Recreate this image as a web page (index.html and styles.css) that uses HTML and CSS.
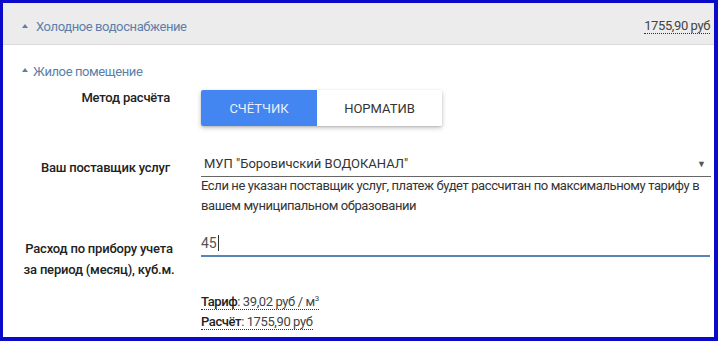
FILE: index.html
```html
<!DOCTYPE html>
<html lang="ru">
<head>
<meta charset="utf-8">
<link rel="stylesheet" href="styles.css">
</head>
<body>
<div class="frame">
  <div class="panel-head">
    <div class="head-title"><span class="tri"></span>Холодное водоснабжение</div>
    <div class="head-sum"><span class="dotted">1755,90 руб</span></div>
  </div>
  <div class="panel-body">
    <div class="sub-title"><span class="tri small"></span>Жилое помещение</div>
    <div class="row row-method">
      <div class="label">Метод расчёта</div>
      <div class="control">
        <div class="toggle">
          <div class="opt active">СЧЁТЧИК</div>
          <div class="opt">НОРМАТИВ</div>
        </div>
      </div>
    </div>
    <div class="row row-supplier">
      <div class="label">Ваш поставщик услуг</div>
      <div class="control">
        <div class="select">
          <span>МУП "Боровичский ВОДОКАНАЛ"</span>
          <span class="arrow">▼</span>
        </div>
        <div class="help">Если не указан поставщик услуг, платеж будет рассчитан по максимальному тарифу в вашем муниципальном образовании</div>
      </div>
    </div>
    <div class="row row-input">
      <div class="label label-center">Расход по прибору учета<br>за период (месяц), куб.м.</div>
      <div class="control">
        <div class="input"><span>45</span><span class="caret"></span></div>
      </div>
    </div>
    <div class="row row-result">
      <div class="label"></div>
      <div class="control result">
        <div><span class="dotted"><b>Тариф</b>: 39,02 руб / м<sup>3</sup></span></div>
        <div><span class="dotted"><b>Расчёт</b>: 1755,90 руб</span></div>
      </div>
    </div>
  </div>
</div>
</body>
</html>
```

FILE: styles.css
```css
* { box-sizing: border-box; }
html, body { margin: 0; padding: 0; background: #fff; }
body { font-family: Roboto, "Noto Sans", sans-serif; color: #333; }

.frame {
  width: 718px;
  height: 341px;
  border-style: solid;
  border-color: #0a0acb;
  border-width: 3px 4px 4px 3px;
  overflow: hidden;
  background: #fff;
}

.panel-head {
  height: 42px;
  background: #ececec;
  border-bottom: 1px solid #d9d9d9;
  display: flex;
  align-items: center;
  justify-content: space-between;
  padding: 6px 4px 0 19px;
}
.head-title {
  font-size: 13px;
  letter-spacing: -0.4px;
  color: #5b7fab;
  display: flex;
  align-items: center;
}
.tri {
  display: inline-block;
  width: 0; height: 0;
  border-left: 3.5px solid transparent;
  border-right: 3.5px solid transparent;
  border-bottom: 4px solid #5b7fab;
  margin-right: 8px;
  position: relative;
  top: -1px;
}
.tri.small { margin-right: 5px; }
.head-sum {
  font-size: 13px;
  letter-spacing: -0.4px;
  color: #444;
  position: relative;
  top: -1px;
}
.dotted {
  border-bottom: 1px dotted #333;
}

.panel-body { padding: 16px 0 0 0; }
.sub-title {
  font-size: 13px;
  letter-spacing: -0.4px;
  color: #5b7fab;
  display: flex;
  align-items: center;
  height: 20px;
  padding-left: 19px;
}

.row { display: flex; }
.label {
  width: 167px;
  flex: none;
  text-align: right;
  font-size: 13px;
  font-weight: 500;
  letter-spacing: -0.2px;
  color: #222;
  line-height: 20px;
  white-space: nowrap;
}
.label-center { text-align: center; width: 172px; padding-left: 20px; margin-right: -5px; }
.control { margin-left: 31px; width: 510px; }

.row-method .label { padding-top: 7px; }
.row-method .control { padding-top: 9px; }
.toggle {
  display: inline-flex;
  height: 36px;
  box-shadow: 0 2px 5px rgba(0,0,0,0.22), 0 1px 2px rgba(0,0,0,0.12);
  border-radius: 2px;
  overflow: hidden;
}
.opt {
  display: flex;
  align-items: center;
  justify-content: center;
  font-size: 13px;
  color: #333;
  background: #fff;
  width: 125px;
}
.opt.active {
  background: #4386f2;
  color: #e8f0fe;
  width: 116px;
}

.row-supplier { margin-top: 23px; }
.row-supplier .label { padding-top: 9px; }
.select {
  height: 28px;
  border-bottom: 1px solid #666;
  display: flex;
  justify-content: space-between;
  align-items: center;
  padding: 2px 5px 0 3px;
  font-size: 13px;
  color: #333;
}
.arrow { font-size: 9px; color: #555; }
.help {
  font-size: 13px;
  letter-spacing: -0.4px;
  line-height: 20px;
  color: #333;
  margin-top: -1px;
}

.row-input { margin-top: 13px; }
.row-input .label { padding-top: 9px; line-height: 21px; }
.input {
  height: 28px;
  border-bottom: 2px solid #5a85b3;
  font-size: 14px;
  color: #555;
  display: flex;
  align-items: center;
  padding-top: 2px;
  width: 509px;
}
.caret {
  display: inline-block;
  width: 1px;
  height: 16px;
  background: #333;
  margin-left: 1px;
}

.row-result { margin-top: 12px; }
.result {
  font-size: 13px;
  letter-spacing: -0.4px;
  color: #444;
  line-height: 20px;
}
.result b { font-weight: 500; color: #222; }
.result sup { font-size: 8px; line-height: 0; vertical-align: 5px; }
```
